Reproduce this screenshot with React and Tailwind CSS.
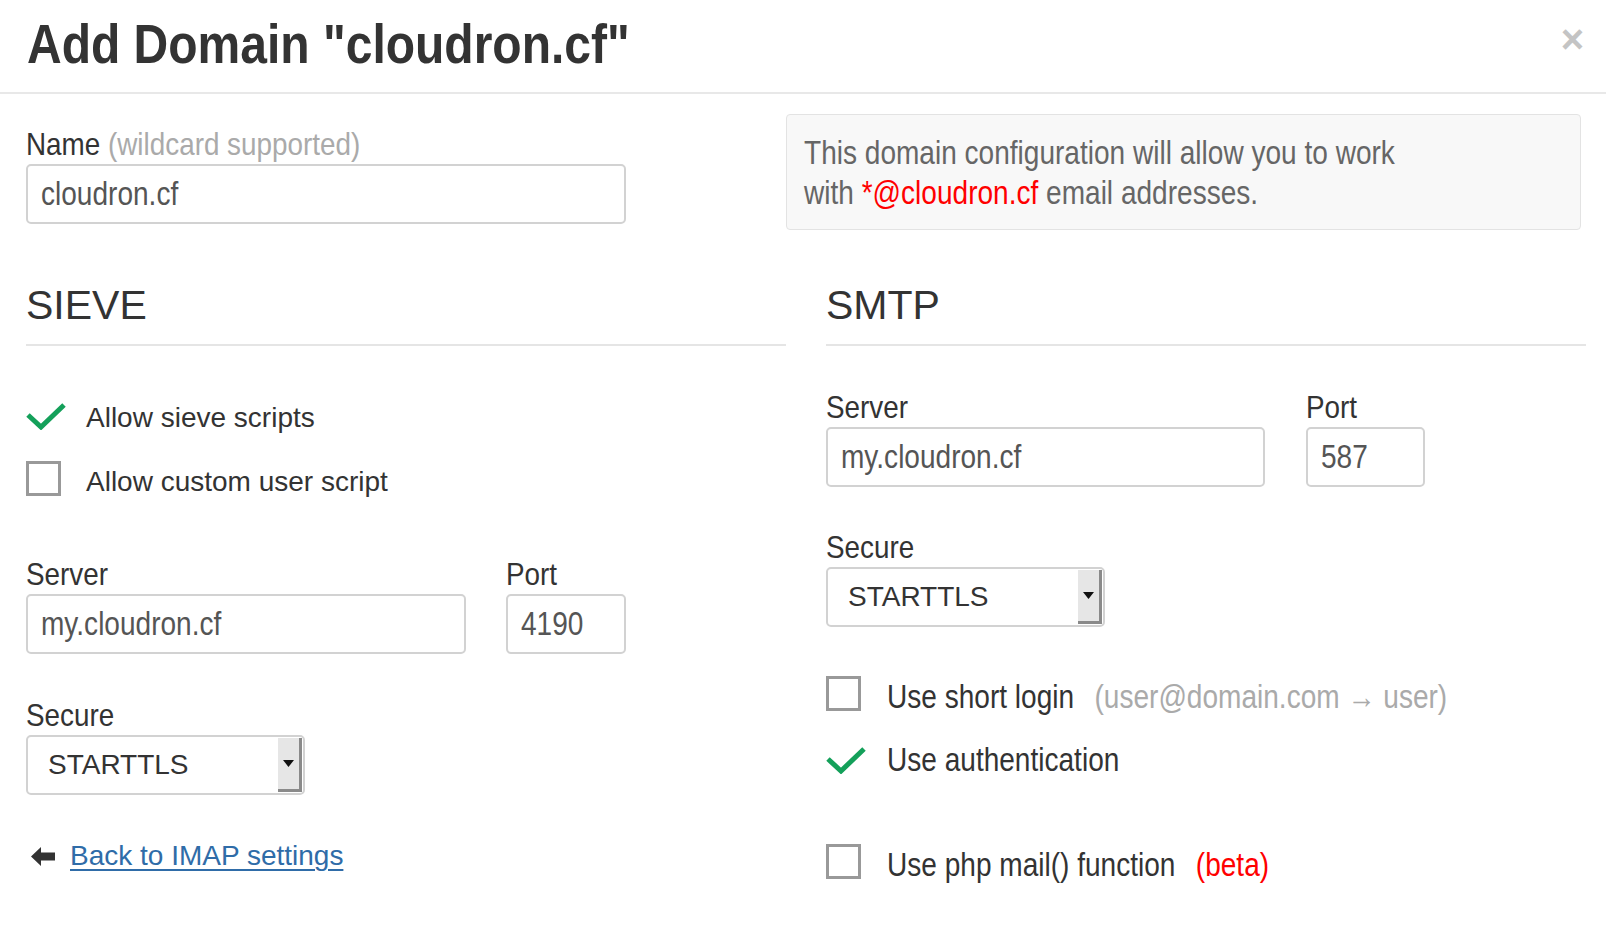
const font = "font-['Liberation_Sans',Arial,sans-serif]";
// no condensed face installed, so the narrow text is squeezed horizontally
const squeeze = 'inline-block origin-left scale-x-[0.85] whitespace-nowrap';

const Label = ({ children }) => (
  <div className={`${font} text-[32px] leading-[40px] text-[#333]`}>
    <span className="inline-block origin-left scale-x-[0.87] whitespace-nowrap">{children}</span>
  </div>
);

const Input = ({ value }) => (
  <div className={`h-[60px] border-2 border-[#d2d2d2] rounded-[5px] flex items-center px-[13px] ${font} text-[33px] text-[#555]`}>
    <span className={squeeze}>{value}</span>
  </div>
);

const Select = ({ value }) => (
  <div className="relative w-[279px] h-[60px] border-2 border-[#d2d2d2] rounded-[5px] flex items-center pl-[20px]">
    <span className={`${font} text-[28px] text-[#333]`}>{value}</span>
    <div className="absolute right-[1px] top-[1px] bottom-[1px] w-[24px] bg-[#e6e6e6] border-r-[3px] border-b-[3px] border-[#8a8a8a] flex items-center justify-center">
      <svg width="11" height="7" viewBox="0 0 11 7">
        <polygon points="0,0 11,0 5.5,7" fill="#111" />
      </svg>
    </div>
  </div>
);

const Check = ({ className = '' }) => (
  <svg width="40" height="28" viewBox="0 0 40 28" className={`shrink-0 ${className}`}>
    <polyline points="2,13 15,25 38,3" fill="none" stroke="#14a05a" strokeWidth="5" />
  </svg>
);

const Box = () => <div className="w-[35px] h-[35px] border-[3px] border-[#999] shrink-0 -translate-y-[4px]" />;

const Heading = ({ children }) => (
  <div className={`${font} text-[41px] leading-[45px] text-[#333] pt-[2px] pb-[16px] border-b-2 border-[#e5e5e5]`}>{children}</div>
);

export default function App() {
  return (
    <div className="w-[1606px] h-[944px] bg-white overflow-hidden">
      <div className="h-[94px] border-b-2 border-[#e8e8e8] pl-[27px] pr-[22px] flex items-center justify-between">
        <h1 className={`${font} font-bold text-[56px] leading-[60px] text-[#333] -mt-[4px] inline-block origin-left scale-x-[0.857] whitespace-nowrap`}>
          Add Domain "cloudron.cf"
        </h1>
        <span className={`${font} font-bold text-[40px] leading-none text-[#c4c4c4] -mt-[14px]`}>×</span>
      </div>

      <div className="pl-[26px] pr-[20px]">
        <div className="flex items-start pt-[19px]">
          <div className="w-[600px] pt-[11px]">
            <Label>
              Name <span className="text-[#aaa]">(wildcard supported)</span>
            </Label>
            <Input value="cloudron.cf" />
          </div>
          <div className={`ml-[160px] mt-[1px] w-[795px] h-[116px] bg-[#f8f8f8] border border-[#e3e3e3] rounded-[4px] px-[17px] pt-[18px] ${font} text-[33px] leading-[40px] text-[#666]`}>
            <div className="origin-left scale-x-[0.85] whitespace-nowrap">
              This domain configuration will allow you to work
              <br />
              with <span className="text-[#f00]">*@cloudron.cf</span> email addresses.
            </div>
          </div>
        </div>

        <div className="flex gap-[40px] mt-[51px]">
          <div className="w-[760px]">
            <Heading>SIEVE</Heading>
            <div className={`${font} text-[28px] leading-[32px] text-[#333] mt-[40px]`}>
              <div className="h-[64px] flex items-center">
                <Check className="-translate-y-[2px]" />
                <span className="ml-[20px]">Allow sieve scripts</span>
              </div>
              <div className="h-[64px] flex items-center">
                <Box />
                <span className="ml-[25px]">Allow custom user script</span>
              </div>
            </div>

            <div className="flex gap-[40px] mt-[40px]">
              <div className="w-[440px]">
                <Label>Server</Label>
                <Input value="my.cloudron.cf" />
              </div>
              <div className="w-[120px]">
                <Label>Port</Label>
                <Input value="4190" />
              </div>
            </div>

            <div className="mt-[41px]">
              <Label>Secure</Label>
              <Select value="STARTTLS" />
            </div>

            <div className={`mt-[45px] h-[32px] flex items-center ${font} text-[28px] leading-[32px]`}>
              <svg width="24" height="19" viewBox="0 0 24 19" className="ml-[5px]">
                <polygon points="0,9.5 10,0 10,5.5 24,5.5 24,13.5 10,13.5 10,19" fill="#333" />
              </svg>
              <a className="ml-[15px] text-[#2f6ca8] underline underline-offset-[4px] decoration-[2px]">Back to IMAP settings</a>
            </div>
          </div>

          <div className="w-[760px]">
            <Heading>SMTP</Heading>
            <div className="flex gap-[41px] mt-[41px]">
              <div className="w-[439px]">
                <Label>Server</Label>
                <Input value="my.cloudron.cf" />
              </div>
              <div className="w-[119px]">
                <Label>Port</Label>
                <Input value="587" />
              </div>
            </div>

            <div className="mt-[40px]">
              <Label>Secure</Label>
              <Select value="STARTTLS" />
            </div>

            <div className={`${font} text-[33px] leading-[40px] text-[#333]`}>
              <div className="mt-[50px] h-[40px] flex items-center">
                <Box />
                <span className={`ml-[26px] ${squeeze}`}>
                  Use short login<span className="ml-[24px] text-[#aaa]">(user@domain.com → user)</span>
                </span>
              </div>
              <div className="mt-[23px] h-[40px] flex items-center">
                <Check />
                <span className={`ml-[21px] ${squeeze}`}>Use authentication</span>
              </div>
              <div className="mt-[65px] h-[40px] flex items-center">
                <Box />
                <span className={`ml-[26px] ${squeeze}`}>
                  Use php mail() function<span className="ml-[24px] text-[#f00]">(beta)</span>
                </span>
              </div>
            </div>
          </div>
        </div>
      </div>
    </div>
  );
}
